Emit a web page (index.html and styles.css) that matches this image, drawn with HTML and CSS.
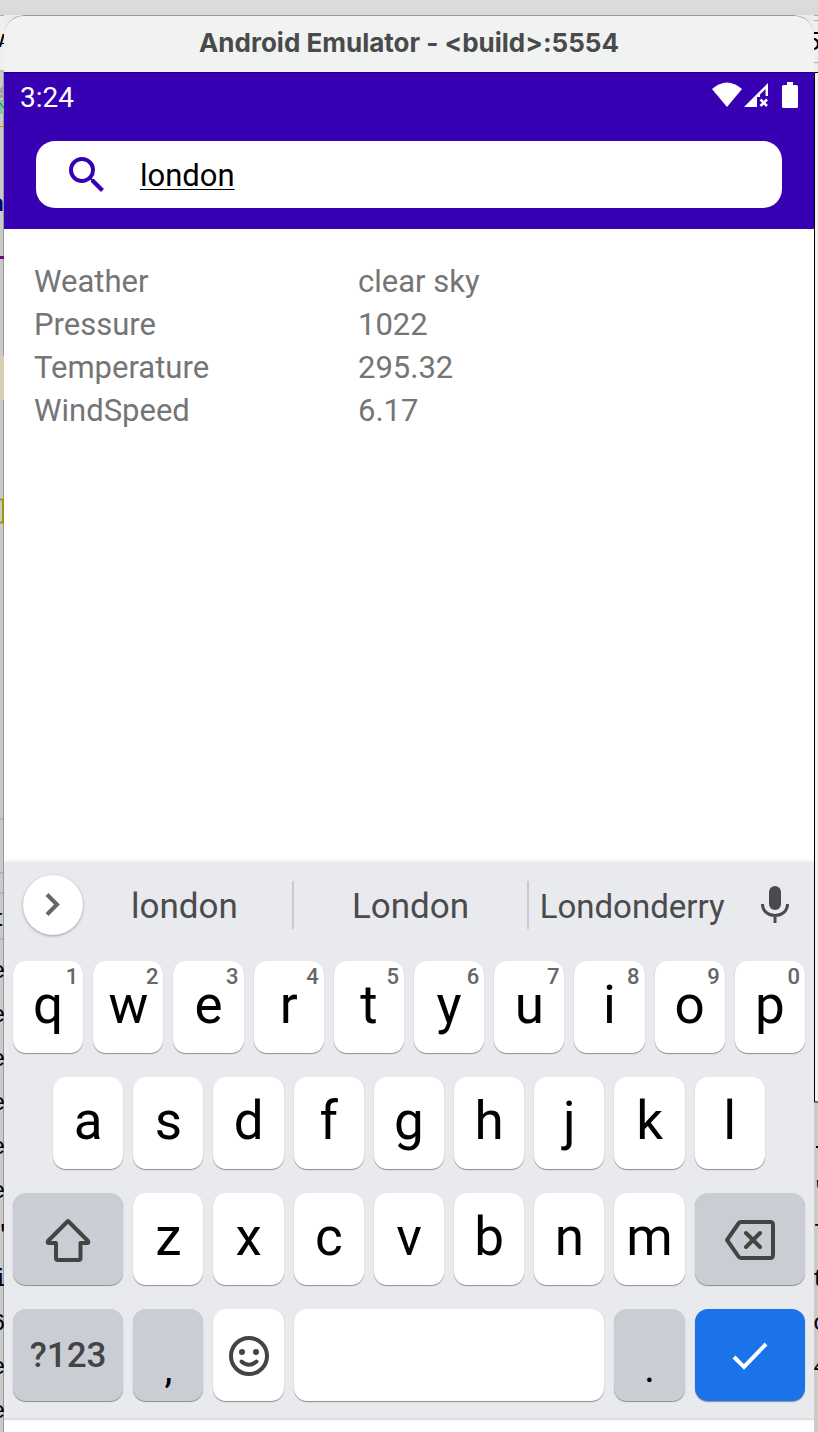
FILE: index.html
```html
<!DOCTYPE html>
<html lang="en">
<head>
<meta charset="utf-8">
<meta name="viewport" content="width=device-width, initial-scale=1">
<title>Android Emulator</title>
<link rel="stylesheet" href="styles.css">
</head>
<body>
<div class="desktop">
  <div class="edge edge-left" aria-hidden="true">
    <svg width="4" height="1432" viewBox="0 0 4 1432">
      <rect width="4" height="57" fill="#efefef"/>
      <rect y="55" width="4" height="2" fill="#bbb"/>
      <path d="M4 69V78H0V74Z" fill="#a4a4a4"/>
      <rect y="79" width="4" height="4" fill="#a4a4a4"/>
      <rect y="85" width="4" height="14" fill="#7cc9a2"/>
      <path d="M0 88L4 93" stroke="#355" fill="none"/>
      <rect y="111" width="4" height="1" fill="#a8a000"/>
      <rect y="241" width="4" height="3" fill="#660e7a"/>
      <rect y="341" width="4" height="44" fill="#d6cfb4"/>
      <path d="M0 484.500H3V507.500H0" fill="none" stroke="#9a9a00" stroke-width="2"/>
      <path d="M0 804H4M0 858H4M0 878H4M0 924H4" stroke="#999"/>
      <text x="-14" y="32" class="ui">w</text><rect y="28" width="4" height="1"/>
      <text x="-10" y="196" class="ui navy">a</text>
      <text x="-5" y="911" class="ui">t</text>
      <text x="-9" y="963">e</text><text x="-9" y="1007">e</text><text x="-9" y="1051">e</text>
      <text x="-9" y="1095">e</text><text x="-9" y="1139">e</text><text x="-9" y="1183">e</text>
      <text x="-7" y="1227">"</text><text x="-7" y="1271">i</text><text x="-9" y="1315">6</text>
      <text x="-9" y="1359">e</text><text x="-9" y="1403">e</text>
    </svg>
  </div>
  <main class="window">
    <header class="titlebar"><h1>Android Emulator - &lt;build&gt;:5554</h1></header>
    <section class="appbar">
      <div class="status">
        <time>3:24</time>
        <div class="status-icons">
          <svg width="30" height="26" viewBox="0 0 30 26" aria-label="Wi-Fi"><path d="M0 7Q15-6 30 7L15 25Z"/></svg>
          <svg class="signal" width="24" height="26" viewBox="0 0 24 26" aria-label="No signal"><path fill-rule="evenodd" d="M0 25L24 1V14H21.500V7L16 12.500V15H13V25Z"/><path class="cross" d="M16.500 17.500L23 24M23 17.500L16.500 24"/></svg>
          <svg width="16" height="26" viewBox="0 0 16 26" aria-label="Battery full"><path d="M5 0H11V3H14.500Q16 3 16 4.500V24.500Q16 26 14.500 26H1.500Q0 26 0 24.500V4.500Q0 3 1.500 3H5Z"/></svg>
        </div>
      </div>
      <label class="search">
        <svg width="48" height="48" viewBox="0 0 24 24" aria-hidden="true"><path d="M15.500 14h-.79l-.28-.27A6.471 6.471 0 0 0 16 9.500 6.500 6.500 0 1 0 9.500 16c1.610 0 3.090-.59 4.230-1.570l.27.28v.79l5 4.990L20.490 19l-4.990-5zm-6 0C7.010 14 5 11.990 5 9.500S7.010 5 9.500 5 14 7.010 14 9.500 11.990 14 9.500 14z"/></svg>
        <input type="text" value="london" aria-label="Search city" spellcheck="false">
      </label>
    </section>
    <dl class="weather">
      <dt>Weather</dt><dd>clear sky</dd>
      <dt>Pressure</dt><dd>1022</dd>
      <dt>Temperature</dt><dd>295.32</dd>
      <dt>WindSpeed</dt><dd>6.17</dd>
    </dl>
    <section class="keyboard" aria-label="Keyboard">
      <div class="suggestions">
        <button class="expand" aria-label="More"><svg width="60" height="60" viewBox="0 0 60 60"><path d="M24 19.500L34 29.500L24 39.500"/></svg></button>
        <button class="word">london</button>
        <button class="word">London</button>
        <button class="word long">Londonderry</button>
        <button class="mic" aria-label="Voice input"><svg width="28" height="38" viewBox="0 0 28 38"><rect x="8" y="0" width="12" height="24" rx="6"/><path d="M1.500 18C1.500 25 7 29.500 14 29.500S26.500 25 26.500 18M14 29V37"/></svg></button>
      </div>
      <div class="keys">
        <button class="key">q<small>1</small></button><button class="key">w<small>2</small></button><button class="key">e<small>3</small></button><button class="key">r<small>4</small></button><button class="key">t<small>5</small></button><button class="key">y<small>6</small></button><button class="key">u<small>7</small></button><button class="key">i<small>8</small></button><button class="key">o<small>9</small></button><button class="key">p<small>0</small></button>
        <button class="key home-start">a</button><button class="key">s</button><button class="key">d</button><button class="key">f</button><button class="key">g</button><button class="key">h</button><button class="key">j</button><button class="key">k</button><button class="key">l</button>
        <button class="key wide mod icon" aria-label="Shift"><svg width="46" height="44" viewBox="0 0 46 44"><path d="M23 3L43 23Q44 25 42 25H35.500V40Q35.500 42 33.500 42H13Q11 42 11 40V25H4Q2 25 3 23Z"/></svg></button><button class="key">z</button><button class="key">x</button><button class="key">c</button><button class="key">v</button><button class="key">b</button><button class="key">n</button><button class="key">m</button><button class="key wide mod icon" aria-label="Backspace"><svg width="50" height="40" viewBox="0 0 50 40"><path d="M16 2H45Q48 2 48 5V35Q48 38 45 38H16Q14.500 38 13.500 36.500L2 20L13.500 3.500Q14.500 2 16 2ZM21 13L35 27M35 13L21 27"/></svg></button>
        <button class="key wide mod symbols">?123</button><button class="key mod punct">,</button><button class="key icon" aria-label="Emoji"><svg width="40" height="40" viewBox="0 0 40 40"><circle cx="20" cy="20" r="18"/><path d="M12.500 25.500Q20 32 27.500 25.500"/><circle class="eye" cx="13" cy="16" r="3"/><circle class="eye" cx="27" cy="16" r="3"/></svg></button><button class="key space" aria-label="Space"></button><button class="key mod punct">.</button><button class="key wide enter icon" aria-label="Done"><svg width="36" height="28" viewBox="0 0 36 28"><path d="M2 15L12 25L34 2"/></svg></button>
      </div>
    </section>
  </main>
  <div class="edge edge-right" aria-hidden="true">
    <svg width="4" height="1432" viewBox="0 0 4 1432">
      <rect width="4" height="57" fill="#efefef"/>
      <path d="M0 5.500H4M0 47.500H4" stroke="#aaa"/>
      <rect y="57" width="4" height="1030" fill="#f1f1f1"/>
      <path d="M4 57.500H.5V1087H4"  fill="none" stroke="#000"/>
      <text x="-8" y="35" class="ui">5</text>
      <rect x="2" y="1131" width="2" height="2"/>
      <text x="-3" y="1183">'</text><text x="-2" y="1227">l</text><text x="-2" y="1271">t</text>
      <text x="-1" y="1315">c</text><text x="-1" y="1359">4</text>
    </svg>
  </div>
</div>
</body>
</html>
```
FILE: styles.css
```css
* { box-sizing: border-box; }
body { margin: 0; font-family: Roboto, "Liberation Sans", sans-serif; }
button { border: 0; margin: 0; padding: 0; background: none; font: inherit; color: inherit; }
svg { display: block; }

.desktop {
  min-height: 100vh;
  padding-top: 15px;
  display: grid;
  grid-template-columns: 4px minmax(0, 1fr) 4px;
  background: linear-gradient(#dcdddd 0, #d8d9d9 15px, #ececec 15px, #ececec 72px, #c9c9c7 72px);
}
.edge { position: relative; overflow: hidden; background: #cacac8; border-top: 1px solid #aaa; }
.edge svg { position: absolute; top: -1px; left: 0; }
.edge text { font: 24px "Liberation Mono", monospace; fill: #000; }
.edge .ui { font: 24px Inter, sans-serif; }
.edge .navy { font-weight: 700; fill: #000080; }
.edge-left { box-shadow: inset -1px 0 #999; }

.window {
  display: flex;
  flex-direction: column;
  background: #fff;
  border-radius: 20px 20px 0 0;
  overflow: hidden;
}
.titlebar {
  height: 57px;
  display: grid;
  place-items: center;
  background: #f0f3f2;
  border-top: 1px solid #999;
  border-radius: 20px 20px 0 0;
}
.titlebar h1 { margin: 0; padding-bottom: 2px; font: 700 26px/32px Inter, sans-serif; color: #4a4a4a; }

.appbar { background: #3700b3; border-top: 1px solid #1c0087; padding: 0 32px 21px; }
.status {
  height: 68px;
  margin: 0 -16px;
  padding-top: 8px;
  display: flex;
  justify-content: space-between;
  color: #fff;
}
.status time { font-size: 28px; line-height: 34px; }
.status-icons { display: flex; padding-top: 1px; }
.status-icons svg { fill: #fff; }
.status-icons .signal { margin: 0 14px 0 2px; }
.cross { stroke: #fff; stroke-width: 2.500; }
.search {
  display: flex;
  align-items: center;
  height: 67px;
  padding: 0 27px;
  gap: 29px;
  border-radius: 19px;
  background: #fff;
}
.search svg { flex: none; fill: #3700b3; }
.search input {
  flex: 1;
  min-width: 0;
  border: 0;
  padding: 2px 0 0;
  outline: 0;
  background: none;
  font: 31px/40px Roboto, sans-serif;
  color: #000;
  text-decoration: underline;
  text-decoration-thickness: 1px;
  text-underline-offset: 3px;
}

.weather {
  flex: 1;
  margin: 0;
  padding: 31px 30px;
  display: grid;
  grid-template-columns: 324px 1fr;
  grid-auto-rows: 43px;
  align-content: start;
  font-size: 31px;
  line-height: 43px;
  color: #757575;
}
.weather dd { margin: 0; }

.keyboard {
  margin-bottom: 12px;
  padding: 12px 4px 17px;
  background: #e8eaed;
  border-bottom: 2px solid #dfe1e1;
  box-shadow: 0 -1px 4px #0002;
}
.suggestions { display: flex; align-items: center; height: 60px; margin-bottom: 26px; padding: 0 21px 0 15px; color: #4a4b4d; }
.expand { flex: none; width: 60px; height: 60px; border-radius: 50%; background: #fff; box-shadow: 0 1px 3px #0005; }
.expand path { fill: none; stroke: #666; stroke-width: 4; }
.word { flex: 237; min-width: 0; height: 48px; padding-top: 4px; font-size: 35px; line-height: 44px; border-right: 2px solid #c8cacd; }
.word:nth-child(2) { flex-grow: 206; padding-right: 6px; }
.word.long { flex-grow: 209; border: 0; font-size: 33px; }
.mic { flex: none; margin-left: 26px; }
.mic rect { fill: #4a4b4d; }
.mic path { fill: none; stroke: #4a4b4d; stroke-width: 3; }

.keys { display: grid; grid-template-columns: repeat(20, minmax(0, 1fr)); grid-auto-rows: 92px; row-gap: 24px; }
.key {
  position: relative;
  grid-column: span 2;
  margin: 0 5px;
  display: grid;
  place-items: center;
  padding-bottom: 4px;
  border-radius: 13px;
  background: #fff;
  box-shadow: 0 1px 1px #0006;
  font-size: 53px;
  line-height: 60px;
  color: #000;
}
.key small { position: absolute; top: 3px; right: 5px; font-size: 22px; line-height: 26px; font-weight: 500; color: #666; }
.key svg { fill: none; stroke: #444; stroke-width: 4; stroke-linecap: round; stroke-linejoin: round; }
.key .eye { fill: #444; stroke: none; }
.icon { padding: 2px 0 0; }
.home-start { grid-column: 2 / span 2; }
.wide { grid-column: span 3; }
.mod { background: #cbcdd5; }
.symbols { padding: 2px 0 0; font-size: 35px; font-weight: 500; color: #444; }
.punct { align-items: end; padding-bottom: 8px; font-size: 40px; line-height: 48px; }
.space { grid-column: span 8; }
.enter { background: #1a73e8; }
.key.enter svg { stroke: #fff; stroke-linecap: butt; stroke-linejoin: miter; }
```
